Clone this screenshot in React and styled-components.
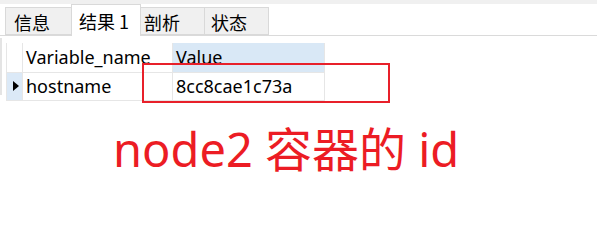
import React from "react";
import styled, { createGlobalStyle } from "styled-components";

const Global = createGlobalStyle`
  html, body { margin: 0; padding: 0; background: #ffffff; }
  body { font-family: "Noto Sans", "Noto Sans CJK SC", sans-serif; color: #000; }
`;

const Page = styled.div`
  width: 597px;
  height: 225px;
  overflow: hidden;
  background: #fff;
`;

const TopBand = styled.div`
  height: 4px;
  background: #f0f0f0;
`;

const TabBar = styled.div`
  display: flex;
  align-items: flex-end;
  height: 31px;
  padding-left: 6px;
  border-bottom: 1px solid #dadada;
`;

const Tab = styled.div`
  box-sizing: border-box;
  height: ${(p) => (p.$active ? "32px" : "28px")};
  margin-bottom: ${(p) => (p.$active ? "-1px" : "0")};
  width: ${(p) => p.$w}px;
  background: ${(p) => (p.$active ? "#ffffff" : "#f0f0f0")};
  border: 1px solid #d9d9d9;
  border-bottom: ${(p) => (p.$active ? "none" : "1px solid #d9d9d9")};
  margin-left: -1px;
  display: flex;
  align-items: center;
  padding-left: ${(p) => p.$pad}px;
  padding-top: ${(p) => (p.$active ? "0" : "1px")};
  font-family: "Noto Sans CJK SC", sans-serif;
  font-size: 18px;
  color: #000;
  white-space: pre;
  position: relative;
  z-index: ${(p) => (p.$active ? 1 : 0)};
`;

const Content = styled.div`
  position: relative;
  display: flex;
  align-items: flex-start;
`;

const Strip = styled.div`
  width: 2px;
  height: 57px;
  margin-top: 2px;
  background: #e4e4e4;
`;

const Grid = styled.div`
  display: grid;
  grid-template-columns: 16px 150px 152px;
  grid-template-rows: 29px 28px;
  margin-left: 4px;
  margin-top: 7px;
  border-right: 1px solid #e6e6e6;
  border-bottom: 1px solid #e6e6e6;
`;

const Cell = styled.div`
  box-sizing: border-box;
  display: flex;
  align-items: center;
  padding-left: ${(p) => (p.$indicator ? 0 : 3)}px;
  justify-content: ${(p) => (p.$indicator ? "center" : "flex-start")};
  background: ${(p) => p.$bg || "#ffffff"};
  border-left: 1px solid #e6e6e6;
  border-top: ${(p) => (p.$noTop ? "none" : "1px solid #e6e6e6")};
  font-size: 18px;
  color: #000;
  white-space: nowrap;
  padding-bottom: 1px;
`;

const Arrow = styled.span`
  width: 0;
  height: 0;
  border-top: 5px solid transparent;
  border-bottom: 5px solid transparent;
  border-left: 6px solid #000;
  margin-left: 2px;
`;

const Highlight = styled.div`
  position: absolute;
  left: 142px;
  top: 27px;
  width: 248px;
  height: 40px;
  box-sizing: border-box;
  border: 2px solid #e8202a;
  pointer-events: none;
`;

const Note = styled.div`
  margin-top: 22px;
  margin-left: 113px;
  font-family: "Noto Sans", "Noto Sans CJK SC", sans-serif;
  font-size: 47px;
  line-height: 52px;
  color: #ec1c24;
  white-space: pre;
`;

export default function App() {
  return (
    <Page>
      <Global />
      <TopBand />
      <TabBar>
        <Tab $w={67} $pad={8}>信息</Tab>
        <Tab $active $w={70} $pad={7}>结果 1</Tab>
        <Tab $w={65} $pad={3}>剖析</Tab>
        <Tab $w={65} $pad={6}>状态</Tab>
      </TabBar>
      <Content>
        <Strip />
        <Grid>
          <Cell $indicator $noTop />
          <Cell $noTop>Variable_name</Cell>
          <Cell $noTop $bg="#d9e8f6">Value</Cell>
          <Cell $indicator $bg="#dbe9f7"><Arrow /></Cell>
          <Cell>hostname</Cell>
          <Cell>8cc8cae1c73a</Cell>
        </Grid>
        <Highlight />
      </Content>
      <Note>node2 容器的 id</Note>
    </Page>
  );
}
